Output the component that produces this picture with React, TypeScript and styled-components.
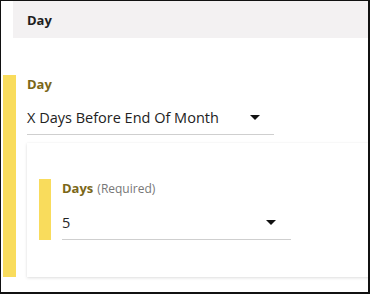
import React from "react";
import styled, { createGlobalStyle } from "styled-components";

const Global = createGlobalStyle`
  html, body { margin: 0; padding: 0; background: #ffffff; }
  body { font-family: "Open Sans", "Noto Sans", Arial, sans-serif; }
  * { box-sizing: border-box; }
`;

const Frame = styled.div`
  width: 370px;
  height: 294px;
  border-style: solid;
  border-color: #111111;
  border-width: 1px 2px 2px 1px;
  overflow: hidden;
  background: #ffffff;
`;

const Header = styled.div`
  margin-left: 12px;
  height: 37px;
  background: #f3f1f2;
  display: flex;
  align-items: center;
  padding-left: 14px;
  font-size: 13px;
  line-height: 18px;
  font-weight: 700;
  color: #1e1e1e;
`;

const Section = styled.div<{ $inset: number }>`
  margin-left: ${(p) => p.$inset}px;
  border-left: ${(p) => (p.$inset === 2 ? 13 : 12)}px solid #f9dc5c;
  padding-left: 11px;
  display: flex;
  flex-direction: column;
`;

const Outer = styled(Section)`
  margin-top: 37px;
`;

const Label = styled.div`
  font-size: 13px;
  line-height: 18px;
  font-weight: 700;
  color: #7b6718;
  display: flex;
  align-items: baseline;
  gap: 4px;
`;

const Hint = styled.span`
  font-size: 12px;
  font-weight: 400;
  color: #777777;
`;

const Select = styled.div<{ $width: number; $right: number }>`
  margin-top: 15px;
  width: ${(p) => p.$width}px;
  display: flex;
  align-items: center;
  justify-content: space-between;
  padding: 0 ${(p) => p.$right}px 6px 0;
  border-bottom: 1px solid #cfcfcf;
  font-size: 14.5px;
  line-height: 20px;
  color: #222222;
`;

const Caret = styled.svg`
  width: 10px;
  height: 5px;
  flex: none;
  margin-top: -2px;
`;

const Card = styled.div`
  margin-top: 8px;
  width: 420px;
  background: #ffffff;
  padding: 36px 0 37px 12px;
  box-shadow: 0 1px 3px rgba(0, 0, 0, 0.13), 0 0 1px rgba(0, 0, 0, 0.06);
`;

const Arrow = () => (
  <Caret viewBox="0 0 10 5">
    <path d="M0 0 L10 0 L5 5 Z" fill="#111111" />
  </Caret>
);

export default function App() {
  return (
    <>
      <Global />
      <Frame>
        <Header>Day</Header>
        <Outer $inset={2}>
          <Label>Day</Label>
          <Select $width={247} $right={14}>
            <span>X Days Before End Of Month</span>
            <Arrow />
          </Select>
          <Card>
            <Section $inset={0}>
              <Label>
                Days <Hint>(Required)</Hint>
              </Label>
              <Select $width={229} $right={15}>
                <span>5</span>
                <Arrow />
              </Select>
            </Section>
          </Card>
        </Outer>
      </Frame>
    </>
  );
}
